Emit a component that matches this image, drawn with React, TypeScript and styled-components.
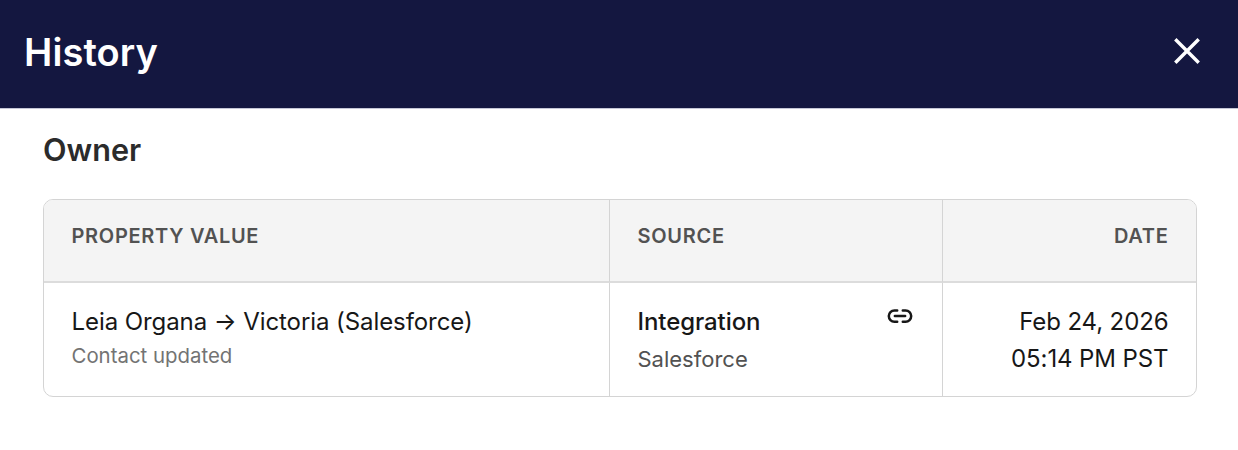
import React from "react";
import styled, { createGlobalStyle } from "styled-components";

const Global = createGlobalStyle`
  html, body { margin: 0; padding: 0; background: #fff; }
  body { font-family: Inter, "Liberation Sans", sans-serif; }
`;

const Page = styled.div`
  width: 1238px;
  height: 450px;
  overflow: hidden;
  background: #fff;
`;

const Header = styled.header`
  box-sizing: border-box;
  height: 109px;
  display: flex;
  align-items: center;
  justify-content: space-between;
  padding: 0 24px 4px;
  background: #141740;
  border-bottom: 1px solid #c4c6d6;
`;

const Title = styled.h1`
  margin: 0;
  font-size: 38px;
  line-height: 44px;
  font-weight: 600;
  letter-spacing: 0.1px;
  color: #fff;
`;

const Close = styled.button`
  display: flex;
  width: 54px;
  height: 54px;
  margin: 0 0 2px;
  padding: 0;
  align-items: center;
  justify-content: center;
  background: none;
  border: 0;
  color: #fff;
`;

const Body = styled.main`
  padding: 22px 41px 0 43px;
`;

const Section = styled.h2`
  margin: 0 0 30px;
  font-size: 30.6px;
  line-height: 38px;
  font-weight: 600;
  color: #2b2b2b;
`;

const Table = styled.div`
  display: grid;
  grid-template-columns: 566px 333px 1fr;
  border: 1px solid #d4d4d4;
  border-radius: 10px;
  overflow: hidden;
`;

const HeadCell = styled.div<{ $end?: boolean; $last?: boolean }>`
  box-sizing: border-box;
  height: 83px;
  padding: 24px 27.5px 0;
  background: #f4f4f4;
  border-bottom: 2px solid #dcdcdc;
  border-right: ${(p) => (p.$last ? "0" : "1px solid #d4d4d4")};
  text-align: ${(p) => (p.$end ? "right" : "left")};
  font-size: 20px;
  line-height: 24px;
  font-weight: 600;
  letter-spacing: 0.7px;
  color: #525252;
`;

const Cell = styled.div<{ $end?: boolean; $last?: boolean }>`
  box-sizing: border-box;
  height: 113px;
  padding: 20px 27.5px 0;
  position: relative;
  border-right: ${(p) => (p.$last ? "0" : "1px solid #d4d4d4")};
  text-align: ${(p) => (p.$end ? "right" : "left")};
`;

const Primary = styled.div<{ $strong?: boolean }>`
  font-size: 24px;
  line-height: 38px;
  letter-spacing: -0.08px;
  font-weight: ${(p) => (p.$strong ? 500 : 400)};
  color: #171717;
`;

const DateLine = styled.div`
  font-size: 24px;
  line-height: 37px;
  letter-spacing: -0.1px;
  color: #171717;
`;

const Secondary = styled.div<{ $tone: string; $large?: boolean }>`
  font-size: ${(p) => (p.$large ? "22px" : "20.4px")};
  line-height: ${(p) => (p.$large ? "36px" : "30px")};
  color: ${(p) => p.$tone};
`;

const LinkMark = styled.svg`
  position: absolute;
  top: 20px;
  right: 28px;
  width: 28px;
  height: 28px;
  color: #171717;
`;

export default function App() {
  return (
    <Page>
      <Global />
      <Header>
        <Title>History</Title>
        <Close aria-label="Close">
          <svg width="28" height="28" viewBox="0 0 28 28" fill="none" stroke="currentColor" strokeWidth="3.4" strokeLinecap="square">
            <path d="M3.5 3.5l21 21M24.5 3.5l-21 21" />
          </svg>
        </Close>
      </Header>
      <Body>
        <Section>Owner</Section>
        <Table>
          <HeadCell>PROPERTY VALUE</HeadCell>
          <HeadCell>SOURCE</HeadCell>
          <HeadCell $end $last>DATE</HeadCell>
          <Cell>
            <Primary>Leia Organa → Victoria (Salesforce)</Primary>
            <Secondary $tone="#737373">Contact updated</Secondary>
          </Cell>
          <Cell>
            <Primary $strong>Integration</Primary>
            <Secondary $tone="#525252" $large>Salesforce</Secondary>
            <LinkMark viewBox="0 0 30 30" fill="none" stroke="currentColor" strokeWidth="2.7" strokeLinecap="round">
              <path d="M12 8H9a6 6 0 0 0 0 12h3M18 8h3a6 6 0 0 1 0 12h-3M9.5 14h11" />
            </LinkMark>
          </Cell>
          <Cell $end $last>
            <DateLine>Feb 24, 2026</DateLine>
            <DateLine>05:14 PM PST</DateLine>
          </Cell>
        </Table>
      </Body>
    </Page>
  );
}
